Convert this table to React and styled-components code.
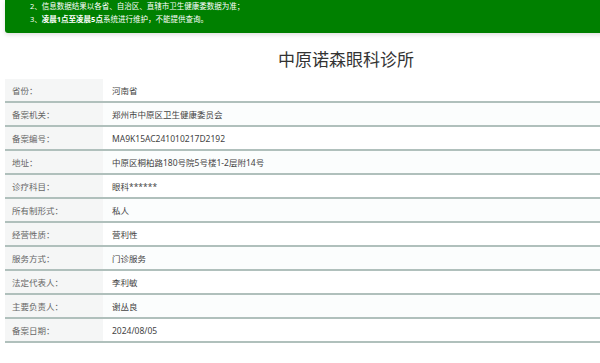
import React from "react";
import styled, { createGlobalStyle } from "styled-components";

const Global = createGlobalStyle`
  html, body { margin: 0; padding: 0; overflow: hidden; background: #fff; }
  body { font-family: "Noto Sans", "Noto Sans CJK SC", sans-serif; }
`;

const Page = styled.div`
  width: 682px;
  margin-left: 5px;
`;

const Notice = styled.div`
  background: #008000;
  color: #fff;
  font-size: 7.5px;
  line-height: 13px;
  padding: 0 0 7px 25px;
  border-radius: 0 0 3px 3px;
  box-shadow: 0 2px 4px rgba(0, 0, 0, 0.12);
`;

const NoticeLine = styled.div`
  white-space: nowrap;
`;

const Strong = styled.b`
  font-weight: 700;
`;

const Title = styled.h1`
  margin: 15px 0 7px;
  text-align: center;
  font-size: 17px;
  line-height: 24px;
  font-weight: 400;
  color: #333;
`;

const Table = styled.div`
  display: flex;
  flex-direction: column;
`;

const Row = styled.div`
  display: grid;
  grid-template-columns: 98px 1fr;
  height: 22px;
  border-bottom: 2px solid #b0c0bc;
  font-size: 8.5px;
  background: ${(p) => (p.$alt ? "#fbfdfd" : "#fff")};
`;

const Label = styled.div`
  display: flex;
  align-items: center;
  padding-left: 7px;
  background: #f5f6f6;
  color: #666;
`;

const Value = styled.div`
  display: flex;
  align-items: center;
  padding-left: 9px;
  color: #444;
`;

const rows = [
  ["省份：", "河南省"],
  ["备案机关：", "郑州市中原区卫生健康委员会"],
  ["备案编号：", "MA9K15AC241010217D2192"],
  ["地址：", "中原区桐柏路180号院5号楼1-2层附14号"],
  ["诊疗科目：", "眼科******"],
  ["所有制形式：", "私人"],
  ["经营性质：", "营利性"],
  ["服务方式：", "门诊服务"],
  ["法定代表人：", "李利敏"],
  ["主要负责人：", "谢丛良"],
  ["备案日期：", "2024/08/05"],
];

export default function App() {
  return (
    <Page>
      <Global />
      <Notice>
        <NoticeLine>2、信息数据结果以各省、自治区、直辖市卫生健康委数据为准；</NoticeLine>
        <NoticeLine>
          3、<Strong>凌晨1点至凌晨5点</Strong>系统进行维护，不能提供查询。
        </NoticeLine>
      </Notice>
      <Title>中原诺森眼科诊所</Title>
      <Table>
        {rows.map(([l, v], i) => (
          <Row key={l} $alt={i % 2 === 1}>
            <Label>{l}</Label>
            <Value>{v}</Value>
          </Row>
        ))}
      </Table>
    </Page>
  );
}
